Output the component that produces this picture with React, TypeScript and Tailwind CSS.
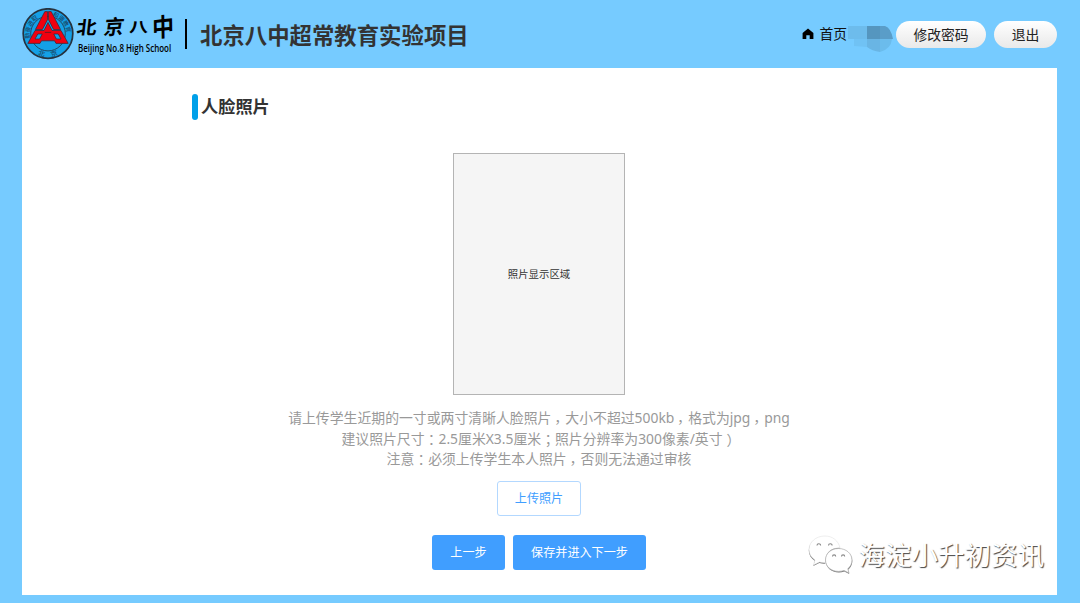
import type { ReactNode } from 'react';

function SchoolBadge() {
  return (
    <svg width="52" height="52" viewBox="0 0 52 52" className="shrink-0">
      <defs>
        <path id="ring-left" d="M8 30.5 A18.6 18.6 0 0 1 21.5 8" />
        <path id="ring-right" d="M30.5 8 A18.6 18.6 0 0 1 44 30.5" />
        <path id="ring-bottom" d="M10 42.5 A22.8 22.8 0 0 0 42 42.5" />
      </defs>
      <circle cx="26" cy="25.6" r="24.8" fill="#14a0e6" stroke="#26323f" strokeWidth="1.7" />
      <circle cx="26" cy="25.6" r="17.3" fill="none" stroke="#26323f" strokeWidth="0.8" />
      <g fill="#1b4a6b" fontSize="5.8" fontWeight="500" fontFamily="Noto Sans CJK SC, sans-serif">
        <text><textPath href="#ring-left">勤奋进取</textPath></text>
        <text><textPath href="#ring-right">和谐教育</textPath></text>
        <text fontSize="7"><textPath href="#ring-bottom" startOffset="7">北　京</textPath></text>
      </g>
      <g fill="#f0000f" stroke="#3a2430" strokeWidth="0.7" strokeLinejoin="round">
        <path d="M25.6 3.6 H22.8 L13.4 21.5 H20.4 L25.6 11.5 Z" />
        <path d="M26.4 3.6 H29.2 L38.6 21.5 H31.6 L26.4 11.5 Z" />
        <path d="M26 14.5 L22 22.5 H13 L5.8 35.4 H18 L19.5 32.8 H32.5 L34 35.4 H46.2 L39 22.5 H30 Z" />
        <path d="M15.8 26 H20.2 L17.6 31 H13 Z M36.2 26 H31.8 L34.4 31 H39 Z" fill="#14a0e6" />
        <path d="M22.8 24.4 H29.2" fill="none" />
      </g>
    </svg>
  );
}

function HomeIcon() {
  return (
    <svg width="12" height="12" viewBox="0 0 12 12" className="shrink-0">
      <path d="M6 0.6 L11.4 5 V11 H7.7 V7.3 H4.3 V11 H0.6 V5 Z" fill="#000" />
    </svg>
  );
}

// mosaic over the account name
function MaskedName() {
  return (
    <svg width="47" height="27" viewBox="0 0 47 27" className="shrink-0">
      <path d="M1 1 H20 V14 H1 Z" fill="#6dbcec" />
      <path d="M7 14 H20 V22 L7 21 Z" fill="#70c2f4" />
      <path d="M20 1 H33 V14 H20 Z" fill="#5596bf" />
      <path d="M33 1 H38 Q44 3 46 14 H33 Z" fill="#5a9dc8" />
      <path d="M20 14 H33 V27 Q25 26 20 22 Z" fill="#69b5e4" />
      <path d="M33 14 H45 Q44 24 33 27 Z" fill="#6bbcec" />
    </svg>
  );
}

function WechatIcon() {
  const back =
    'M17 1 C8 1 1 7 1 14.5 C1 18.8 3.2 22.4 7 25 L5.5 30 L11.5 27 C13.2 27.5 15 27.8 17.5 27.8 C17 18 22 13 32 12.8 C30.5 5.8 24.5 1 17 1 Z';
  const front =
    'M30.5 13.5 C23 13.5 17.5 18.5 17.5 25 C17.5 31.5 23 36.4 30.5 36.4 C32.5 36.4 34.3 36 36 35.5 L41 38 L39.8 33.7 C42.6 31.5 44 28.5 44 25 C44 18.5 38 13.5 30.5 13.5 Z';
  return (
    <svg width="46" height="40" viewBox="0 0 46 40" className="shrink-0">
      <path d={back} fill="#777" transform="translate(-0.2 1)" />
      <path d={back} fill="#fff" stroke="#ddd" strokeWidth="0.5" />
      <path d={front} fill="#777" transform="translate(0.3 1)" />
      <path d={front} fill="#fff" stroke="#aaa" strokeWidth="0.7" />
      <path
        d="M9 10.5 a1.8 1.8 0 0 1 3.6 0 M20.5 10.5 a1.8 1.8 0 0 1 3.6 0 M24.5 21.5 a1.6 1.6 0 0 1 3.2 0 M33.5 21.5 a1.6 1.6 0 0 1 3.2 0"
        fill="none"
        stroke="#888"
        strokeWidth="1.1"
      />
    </svg>
  );
}

// full-width punctuation centred in its cell
function Punct({ children, className = '' }: { children: ReactNode; className?: string }) {
  return (
    <span className={`inline-block h-[20px] align-top font-['Noto_Sans_CJK_TC',sans-serif] leading-[20.7px] ${className}`}>
      {children}
    </span>
  );
}

function Comma() {
  return <Punct className="w-[13.86px] pt-[3px] -indent-[1.5px]">，</Punct>;
}

function PillButton({ children, className }: { children: ReactNode; className: string }) {
  return (
    <button
      className={`h-[27px] rounded-full bg-linear-to-b from-white to-[#e9e9e9] text-[13.8px] leading-[27px] text-[#222] ${className}`}
    >
      {children}
    </button>
  );
}

function HomeLink() {
  return (
    <a className="flex h-[26px] items-center gap-[5px] text-[13.8px] leading-[26px] whitespace-nowrap text-[#111]">
      <HomeIcon />
      首页
    </a>
  );
}

export default function App() {
  return (
    <div className="flex h-[603px] w-[1080px] flex-col overflow-hidden bg-[#76cbff] pr-[23px] pb-[8px] pl-[22px] font-['Noto_Sans','Noto_Sans_CJK_SC',sans-serif] text-[#333]">
      <header className="flex h-[68px] shrink-0 items-start">
        <div className="mt-[8px] flex">
          <SchoolBadge />
          <div className="ml-[3px] w-[100px] pt-[3px] text-black">
            <div className="flex h-[31px] items-center font-bold whitespace-nowrap">
              <span className="w-[27px] -skew-x-6 scale-y-90 pt-[3px] text-[20px]">北</span>
              <span className="w-[25px] -skew-x-12 -rotate-3 text-[20px]">京</span>
              <span className="w-[23px] scale-y-75 pt-[2px] text-[19px]">八</span>
              <span className="-skew-x-6 -rotate-6 scale-y-115 text-[22px]">中</span>
            </div>
            <div className="mt-[-1px] ml-px h-[14px] w-[93px] origin-left scale-x-[0.76] font-['Open_Sans',sans-serif] text-[10.5px] leading-[15px] font-semibold whitespace-nowrap">
              Beijing No.8 High School
            </div>
          </div>
        </div>
        <div className="mt-[19px] ml-[8px] h-[30px] w-[2px] bg-black" />
        <h1 className="mt-[19px] ml-[13px] text-[22.4px] leading-[34px] font-bold whitespace-nowrap">
          北京八中超常教育实验项目
        </h1>
        <nav className="mt-[20.5px] ml-auto flex items-start">
          <HomeLink />
          <div className="mt-[4px]">
            <MaskedName />
          </div>
          <PillButton className="ml-[2px] w-[90px]">修改密码</PillButton>
          <PillButton className="ml-[8px] w-[63px]">退出</PillButton>
        </nav>
      </header>

      <main className="relative flex flex-1 flex-col items-center bg-white pr-px">
        <div className="mt-[26px] flex h-[26px] w-full items-center pl-[170px]">
          <div className="h-[26px] w-[6px] rounded-[3px] bg-[#00a0e9]" />
          <h2 className="ml-[3px] text-[17.2px] leading-[26px] font-bold">人脸照片</h2>
        </div>

        <div className="mt-[33px] flex h-[242px] w-[172px] shrink-0 items-center justify-center border border-[#b4b4b4] bg-[#f5f5f5] pt-[2px] text-[10.4px]">
          照片显示区域
        </div>

        <div className="mt-[13px] text-center text-[13.86px] leading-[20.7px] whitespace-nowrap text-[#999]">
          <p>请上传学生近期的一寸或两寸清晰人脸照片<Comma />大小不超过500kb<Comma />格式为jpg<Comma />png</p>
          <p>建议照片尺寸<Punct>：</Punct>2.5厘米X3.5厘米<Punct>；</Punct>照片分辨率为300像素/英寸<Punct className="w-[14px] indent-[4px]">）</Punct></p>
          <p>注意<Punct>：</Punct>必须上传学生本人照片<Comma />否则无法通过审核</p>
        </div>

        <button className="mt-[11px] h-[35px] w-[84px] shrink-0 rounded-[3px] border border-[#b3d8ff] bg-white text-[12.1px] text-[#409eff]">
          上传照片
        </button>

        <div className="mt-[19px] flex gap-[8px] text-[12.1px] text-white">
          <button className="h-[35px] w-[73px] rounded-[3px] bg-[#409eff]">上一步</button>
          <button className="h-[35px] w-[133px] rounded-[3px] bg-[#409eff]">保存并进入下一步</button>
        </div>

        <div className="absolute right-[13px] bottom-[20px] flex items-center gap-[5px]">
          <WechatIcon />
          <span className="text-[26.5px] leading-[40px] whitespace-nowrap text-white [text-shadow:1px_1px_1px_#444]">
            海淀小升初资讯
          </span>
        </div>
      </main>
    </div>
  );
}
